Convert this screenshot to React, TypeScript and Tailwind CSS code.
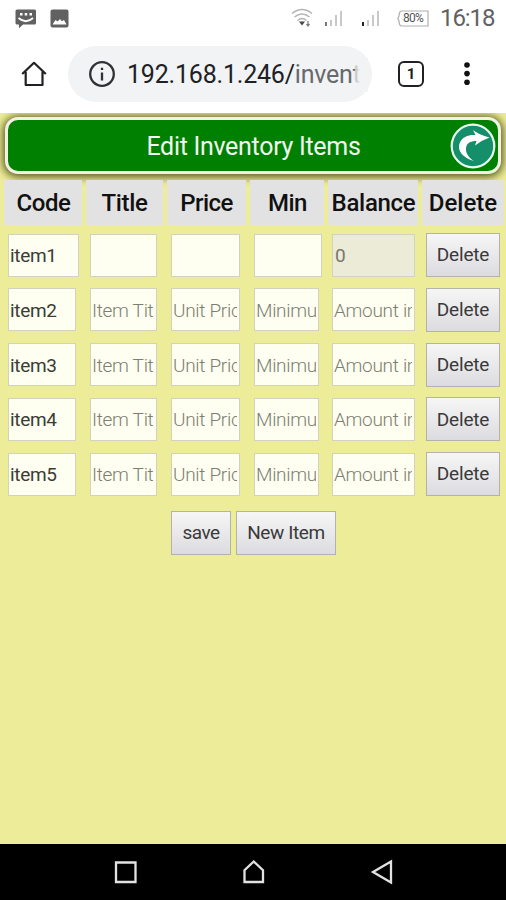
import React from "react";

const columns = [
  { title: "Code", cls: "tracking-[-0.4px] pl-[1px]" },
  { title: "Title", cls: "tracking-[-0.3px]" },
  { title: "Price", cls: "tracking-[-0.6px]" },
  { title: "Min", cls: "tracking-[-0.5px] pl-[1px]" },
  { title: "Balance", cls: "tracking-[-0.3px] pl-[1px]" },
  { title: "Delete", cls: "tracking-[0px]" },
];

const rows = ["item1", "item2", "item3", "item4", "item5"];

const field =
  "h-[43px] rounded-none border border-[#d2d2c0] bg-[#fefff0] p-0 pl-[1px] pr-[2px] pt-px text-[19px] font-normal tracking-[-0.3px] text-[#3b3c35] outline-none placeholder:font-light placeholder:text-[#7d7e72] placeholder:opacity-100";
const button =
  "h-[44px] shrink-0 border border-[#b3b3ad] bg-linear-to-b from-[#f6f6f6] to-[#dcdce0] pt-px text-[19px] text-[#3a3a3a]";

function StatusBar() {
  return (
    <div className="flex h-[36px] items-center pl-[15px] pr-[11px]">
      <svg width="22" height="20" viewBox="0 0 22 20" className="mt-[2px]">
        <path d="M2 0.5h17.5a1.5 1.5 0 0 1 1.5 1.5v12a1.5 1.5 0 0 1-1.5 1.5H8L4 19.2V15.5H2A1.5 1.5 0 0 1 .5 14V2A1.5 1.5 0 0 1 2 .5Z" fill="#616161" />
        <path d="M5 4h2.5v2.5H5zM9.7 4h2.5v2.5H9.7zM14.5 4H17v2.5h-2.5z" fill="#fff" />
        <path d="M3.5 9Q11 15.5 18 9" stroke="#fff" strokeWidth="1.8" fill="none" />
      </svg>
      <svg width="19" height="19" viewBox="0 0 19 19" className="ml-[13px]">
        <rect x="0.5" y="0.5" width="18" height="18" rx="2" fill="#616161" />
        <path d="M2.5 15.5 5.5 11l2.2 1.5L10 10l1.8 2.2L14 11l2.5 4.5Z" fill="#fff" />
      </svg>
      <div className="ml-auto flex items-center">
        <svg width="22" height="20" viewBox="0 0 22 20" fill="none" stroke="#b5b5b5" strokeWidth="1.6">
          <path d="M1 5.5Q11-2.5 21 5.5M3.5 9Q11 3 18.5 9M6.5 12.5Q11 8.5 15.5 12.5" />
          <path d="M8 13.5h6l-3 4Z" fill="#444" stroke="none" />
          <path d="M17 13v5M15.5 16l1.5 2 1.5-2" stroke="#777" strokeWidth="1.2" />
        </svg>
        <svg width="20" height="18" viewBox="0 0 20 18" className="ml-[11px]">
          <path d="M1 13h2v4H1z" fill="#777" />
          <path d="M6 11h2v6H6zM11 6h2v11h-2zM16 2h2v15h-2z" fill="#c8c8c8" />
        </svg>
        <svg width="20" height="18" viewBox="0 0 20 18" className="ml-[17px]">
          <path d="M1 13h2v4H1z" fill="#222" />
          <path d="M6 11h2v6H6zM11 6h2v11h-2zM16 2h2v15h-2z" fill="#c8c8c8" />
        </svg>
        <div className="relative ml-[16px] flex h-[17px] w-[32px] items-center justify-center">
          <svg className="absolute inset-0" width="32" height="17" viewBox="0 0 32 17" fill="none" stroke="#b0b0b0" strokeWidth="1.2">
            <path d="M4 1h27v15H4M4 1Q2 2 2 6L.8 8.5 2 11Q2 15 4 16" />
          </svg>
          <span className="text-[12px] leading-none tracking-[-0.7px] text-[#555]">80%</span>
        </div>
        <span className="ml-[11px] w-[55px] text-[24px] leading-[36px] tracking-[-1.1px] text-[#616161]">16:18</span>
      </div>
    </div>
  );
}

function AddressBar() {
  return (
    <div className="flex h-[77px] items-start pl-[20px] pt-[10px]">
      <svg width="28" height="28" viewBox="0 0 28 28" className="mt-[14px]" fill="none" stroke="#202124" strokeWidth="2.2" strokeLinejoin="round">
        <path d="M2.2 14 14 2.8 25.8 14M5.7 11.8V25h16.8V11.8" />
      </svg>
      <div className="ml-[20px] flex h-[56px] w-[304px] items-center rounded-full bg-[#f1f3f4] pl-[20px]">
        <svg width="28" height="28" viewBox="0 0 28 28" fill="none" stroke="#303134" strokeWidth="2.3">
          <circle cx="14" cy="14" r="11.8" />
          <path d="M14 12.5v8M14 7.7v2.4" />
        </svg>
        <div className="relative ml-[11px] mt-px w-[231px] whitespace-nowrap text-[25px] leading-[34px] tracking-[-0.2px] text-[#202124]">
          192.168.1.246/<span className="text-[#66696d]">invent</span>
          <div className="absolute inset-y-0 -right-[10px] w-[13px] bg-linear-to-r from-[#f1f3f4]/60 to-[#f1f3f4] to-40%" />
        </div>
      </div>
      <div className="ml-[26px] mt-[15px] flex h-[26px] w-[26px] items-center justify-center rounded-[6px] border-[2.5px] border-[#202124] text-[15px] font-bold text-[#202124]">
        1
      </div>
      <svg width="8" height="26" viewBox="0 0 8 26" className="ml-[39px] mt-[15px]" fill="#111">
        <circle cx="4" cy="4" r="2.8" />
        <circle cx="4" cy="12.6" r="2.8" />
        <circle cx="4" cy="21.3" r="2.8" />
      </svg>
    </div>
  );
}

function TitleBar() {
  return (
    <div className="px-[5px] pt-[4px]">
      <div className="flex h-[57px] items-center justify-end rounded-[13px] border-[3px] border-[#f3f1e4] bg-[#008000] pr-[2px] shadow-[0_1px_8px_2px_#55551c]">
        <h1 className="flex-1 pl-[49px] pt-[2px] text-center text-[25px] leading-none tracking-[-0.3px] text-[#f2f8f0]">Edit Inventory Items</h1>
        <svg width="46" height="46" viewBox="0 0 46 46" className="mt-px">
          <circle cx="23" cy="23" r="21.3" fill="#148f69" stroke="#e8fff2" strokeWidth="2.2" />
          <path d="M24 38C13 35 7 28 9.5 20.5 12 13.5 19 11.5 25.5 12L23 7Q29 12 39.5 14.5 31 17.5 25 22.5L26.500 18C20 18 16.500 20.500 16 25 15.500 30 18.500 34.500 24 38Z" fill="#fff" />
        </svg>
      </div>
    </div>
  );
}

function InventoryTable() {
  return (
    <div className="pl-[4px] pt-[6px]">
      <div className="grid grid-cols-[78px_77px_79px_74px_90px_82px] gap-x-[4px]">
        {columns.map((c) => (
          <div key={c.title} className="flex h-[45px] items-center justify-center bg-[#e2e2e2] pt-px text-[24px] font-medium text-[#111]">
            <span className={c.cls}>{c.title}</span>
          </div>
        ))}
      </div>
      <div className="flex flex-col gap-[10.75px] pt-[8px]">
        {rows.map((name, i) => (
          <div key={name} className="grid h-[44px] grid-cols-[78px_77px_79px_74px_90px_78px] items-center gap-x-[4px] pl-[4px]">
            <input className={`${field} ${i === 0 ? "w-[71px]" : "w-[68px]"}`} defaultValue={name} />
            <input className={`${field} w-[67px]`} placeholder={i === 0 ? "" : "Item Title"} />
            <input className={`${field} w-[69px]`} placeholder={i === 0 ? "" : "Unit Price"} />
            <input className={`${field} ${i === 0 ? "w-[68px]" : "w-[65px]"}`} placeholder={i === 0 ? "" : "Minimum"} />
            {i === 0 ? (
              <input className="h-[43px] w-[83px] border border-[#d2d2c0] bg-[#ebebd7] p-0 pl-[2px] text-[19px] text-[#77786c]" defaultValue="0" disabled />
            ) : (
              <input className={`${field} w-[83px]`} placeholder="Amount in stock" />
            )}
            <button className={`${button} w-[74px] tracking-[-0.2px]`}>Delete</button>
          </div>
        ))}
      </div>
    </div>
  );
}

export default function App() {
  return (
    <div className="flex h-[900px] w-[506px] flex-col overflow-hidden bg-white font-['Roboto',sans-serif]">
      <StatusBar />
      <AddressBar />
      <main className="flex-1 overflow-hidden bg-[#eded99]">
        <TitleBar />
        <InventoryTable />
        <div className="flex gap-[5px] pl-[171px] pt-[15px]">
          <button className={`${button} w-[60px] tracking-[-0.5px]`}>save</button>
          <button className={`${button} w-[100px] tracking-[-0.4px]`}>New Item</button>
        </div>
      </main>
      <nav className="flex h-[56px] items-center bg-black pl-[114px]">
        <svg width="280" height="26" viewBox="0 0 280 26" fill="none" stroke="#e2e2e2" strokeWidth="2.3">
          <path d="M2 3.5h19.5v19.5H2Z" />
          <path d="M130.500 23V11.200L139.700 2.500 149 11.200V23Z" />
          <path d="M277 2.500V23.500L259 13Z" />
        </svg>
      </nav>
    </div>
  );
}
